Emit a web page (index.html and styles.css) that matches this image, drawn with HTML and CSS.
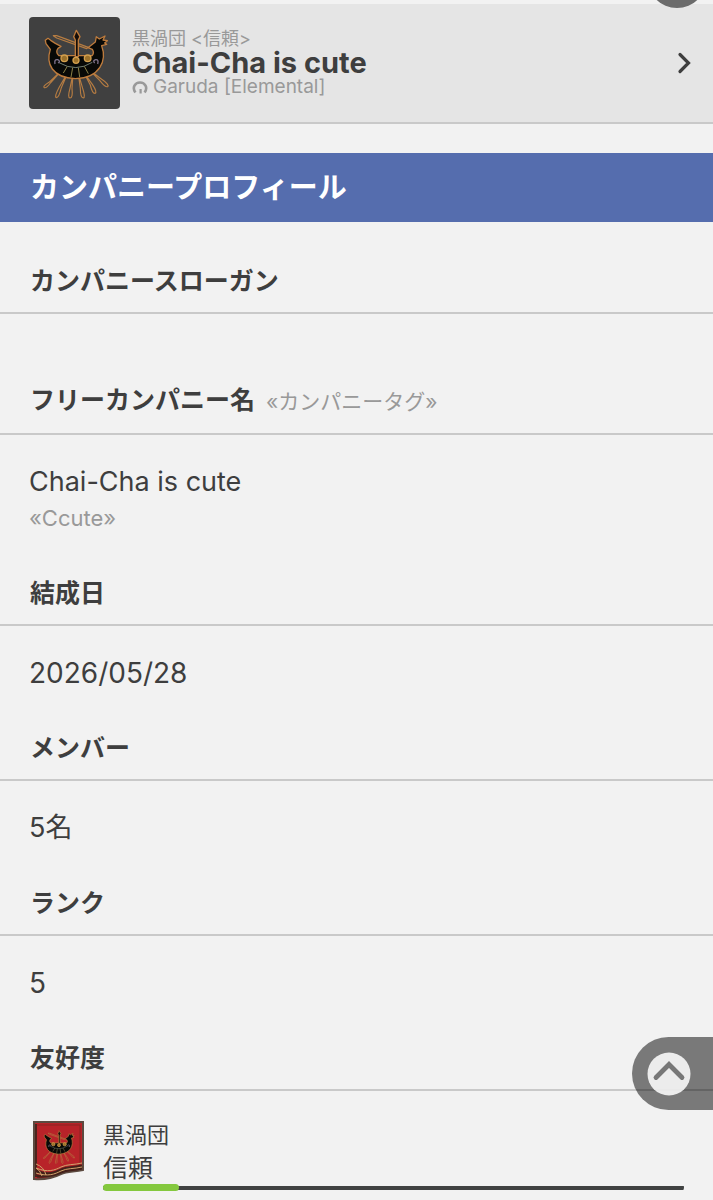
FILE: index.html
```html
<!DOCTYPE html>
<html lang="ja">
<head>
<meta charset="utf-8">
<meta name="viewport" content="width=device-width, initial-scale=1">
<title>Chai-Cha is cute</title>
<link rel="stylesheet" href="styles.css">
</head>
<body>
<svg class="defs" aria-hidden="true">
  <symbol id="ship" viewBox="0 0 228 240">
    <g fill="none" stroke="#b57c42" stroke-width="3.500" stroke-linejoin="round">
      <path d="M76 140 36 178q-20 12-14 16 7 2 18-14zM93 148 67 192q-16 30-9 32 8 0 15-30zM108 152l-9 44q-8 28 0 29 9 0 6-29zM124 152l6 44q0 29 9 29 7-2-2-29zM140 148l20 38q6 26 14 25 8-3-8-27zM156 140l32 32q17 22 24 19 6-6-18-22z"/>
      <path d="m49 38 10 0 95 35-5 4-90-32z"/>
    </g>
    <path d="M25 52 33 46l8 6 14 9 17 9-9 6q-9 12 3 22H165q8-8 1-19l-13-5 22-17 3-16 9 7 17-9-6 12 13 2-8 7 6 4-15 4C210 112 190 164 115 167 45 164 26 122 40 79L27 62z" fill="#080907" stroke="#bd7b3d" stroke-width="4" stroke-linejoin="round"/>
    <path d="m118 22-8 19 5 10v50h9V51l5-10z" fill="#140d09" stroke="#bd7b3d" stroke-width="4" stroke-linejoin="round"/>
    <path d="M66 119q51 30 100-1" fill="none" stroke="#6f7c70" stroke-width="3"/>
    <path d="m91 130-12 20M107 134l-5 28M124 134l4 28M142 130l12 22" stroke="#8c8248" stroke-width="3"/>
    <g fill="#9c712a" stroke="#d3a04e" stroke-width="4"><circle cx="82" cy="106" r="10"/><circle cx="117" cy="112" r="9"/><circle cx="152" cy="106" r="10"/></g>
    <path d="M54 123q-3-15 8-13 10 5 1 10M182 123q4-14-6-13-10 3-3 10" fill="none" stroke="#82748d" stroke-width="4"/>
  </symbol>
</svg>

<header>
  <a class="company" href="#profile">
    <span class="crest"><svg class="crest-art"><use href="#ship"/></svg></span>
    <span class="company-text">
      <span class="sub rank">黒渦団 &lt;信頼&gt;</span>
      <strong class="company-name">Chai-Cha is cute</strong>
      <span class="sub world"><svg class="home" viewBox="0 0 16 14" aria-hidden="true"><path d="M3.400 12.500C-.2 7.500 3 2.500 8 2.500s8.200 5 4.600 10" fill="none" stroke="currentColor" stroke-width="2.600"/><path d="M7.500 9h2.200v4.500H7.500z" fill="currentColor"/></svg>Garuda [Elemental]</span>
    </span>
    <svg class="arrow" viewBox="0 0 14 22" aria-hidden="true"><path d="m3 2.500 8.500 8.500L3 19.500" fill="none" stroke="currentColor" stroke-width="3.200" stroke-linecap="round"/></svg>
  </a>
</header>

<main id="profile">
  <h1 class="banner">カンパニープロフィール</h1>
  <section><h2 class="label">カンパニースローガン</h2><div class="value empty"></div></section>
  <section><h2 class="label">フリーカンパニー名 <span class="tag-label">«カンパニータグ»</span></h2>
    <div class="value"><p class="line">Chai-Cha is cute</p><p class="tag">«Ccute»</p></div></section>
  <section><h2 class="label">結成日</h2><div class="value"><p class="line number">2026/05/28</p></div></section>
  <section><h2 class="label">メンバー</h2><div class="value"><p class="line">5名</p></div></section>
  <section><h2 class="label">ランク</h2><div class="value"><p class="line number">5</p></div></section>
  <section><h2 class="label">友好度</h2>
    <div class="reputation">
      <svg class="flag" viewBox="0 0 52 60" aria-hidden="true">
        <path d="M1 1h49v48c-9 2-16 1-22 4-8 4-15 6-27 5z" fill="#b82329" stroke="#5c4a40" stroke-width="2"/>
        <path d="M4 4h43v42" fill="none" stroke="#8a2523" stroke-width="1"/>
        <path d="M3 3v53" stroke="#4d241d" stroke-width="2"/>
        <path d="M3 50c12 5 19 2 25-1 6-3 13-2 21-4M4 55c12 1 18-1 24-4 6-3 13-2 21-4" fill="none" stroke="#43201a" stroke-width="3"/>
        <path d="M3 47c12 5 19 2 25-1 6-3 13-2 21-4M3 52c12 4 19 1 25-2 6-3 13-2 21-4M3 43q8 3 10 11M3 47q4 2 6 8" fill="none" stroke="#d0a36c" stroke-width="1"/>
        <use href="#ship" x="7" y="6" width="37" height="39"/>
      </svg>
      <div class="rep-body">
        <p class="rep-company">黒渦団</p>
        <p class="rep-level">信頼</p>
        <div class="bar" role="img" aria-label="信頼"><span class="bar-fill" style="width:13%"></span></div>
      </div>
    </div>
  </section>
</main>

<button class="menu" type="button" aria-label="メニュー"></button>
<button class="to-top" type="button" aria-label="ページの先頭へ">
  <svg class="to-top-icon" viewBox="0 0 44 44"><circle cx="22" cy="22" r="21.500" fill="#fff" fill-opacity=".86"/><path d="m9 25.500 13-13 13 13" fill="none" stroke="#777" stroke-width="4.800" stroke-linecap="round"/></svg>
</button>
</body>
</html>
```
FILE: styles.css
```css
* { box-sizing: border-box; }
body {
  margin: 0;
  padding-top: 4px;
  background: #f2f2f2;
  color: #3e3e3e;
  font-family: Inter, "Noto Sans CJK JP", sans-serif;
}
h1, h2, p { margin: 0; }
.defs { position: absolute; width: 0; height: 0; }

.company {
  display: flex;
  align-items: center;
  gap: 12px;
  padding: 13px 22px 13px 29px;
  background: #e5e5e5;
  border-bottom: 2px solid #c9c9c9;
  color: inherit;
  text-decoration: none;
}
.crest {
  display: flex;
  align-items: center;
  justify-content: center;
  width: 91px;
  height: 92px;
  border-radius: 4px;
  background: #404040;
}
.crest-art { width: 76px; height: 80px; }
.company-text { display: flex; flex: 1; flex-direction: column; }
.sub { color: #999; font-size: 19px; line-height: 22px; }
.rank { font-size: 18px; }
.company-name { font-size: 29px; line-height: 26px; }
.world { display: flex; align-items: center; gap: 5px; }
.home { width: 16px; height: 14px; }
.arrow { width: 14px; height: 22px; }

.banner {
  margin: 29px 0 8px;
  padding: 0 30px;
  background: #556dae;
  color: #fff;
  font-size: 29px;
  line-height: 69px;
}
.label {
  padding: 32px 30px 12px;
  border-bottom: 2px solid #c9c9c9;
  font-size: 25px;
  line-height: 38px;
}
.tag-label { margin-left: 5px; color: #999; font-size: 21px; font-weight: 400; }
.value { padding: 26px 29px 3px; }
.empty { min-height: 35px; }
.line { font-size: 27px; line-height: 42px; }
.number { font-size: 28px; }
.tag { padding-bottom: 6px; color: #999; font-size: 22px; line-height: 30px; }

.reputation { display: flex; gap: 18px; padding: 30px 29px 10px 33px; }
.flag { width: 52px; height: 60px; }
.rep-body { flex: 1; }
.rep-company { font-size: 22px; line-height: 28px; }
.rep-level { font-size: 25px; line-height: 38px; }
.bar {
  display: flex;
  align-items: center;
  height: 7px;
  margin-top: -3px;
  border-radius: 4px;
  background: linear-gradient(#404242, #404242) center / 100% 4px no-repeat;
}
.bar-fill { height: 7px; border-radius: 4px; background: #84c83e; }

.menu, .to-top { border: 0; padding: 0; }
.menu {
  position: fixed;
  top: -52px;
  right: 6px;
  width: 60px;
  height: 60px;
  border-radius: 50%;
  background: #6b6b6b;
}
.to-top {
  position: fixed;
  right: 0;
  bottom: 90px;
  display: flex;
  align-items: center;
  width: 81px;
  height: 73px;
  padding-left: 15px;
  border-radius: 37px 0 0 37px;
  background: rgba(0, 0, 0, .5);
}
.to-top-icon { width: 44px; height: 44px; }
```
